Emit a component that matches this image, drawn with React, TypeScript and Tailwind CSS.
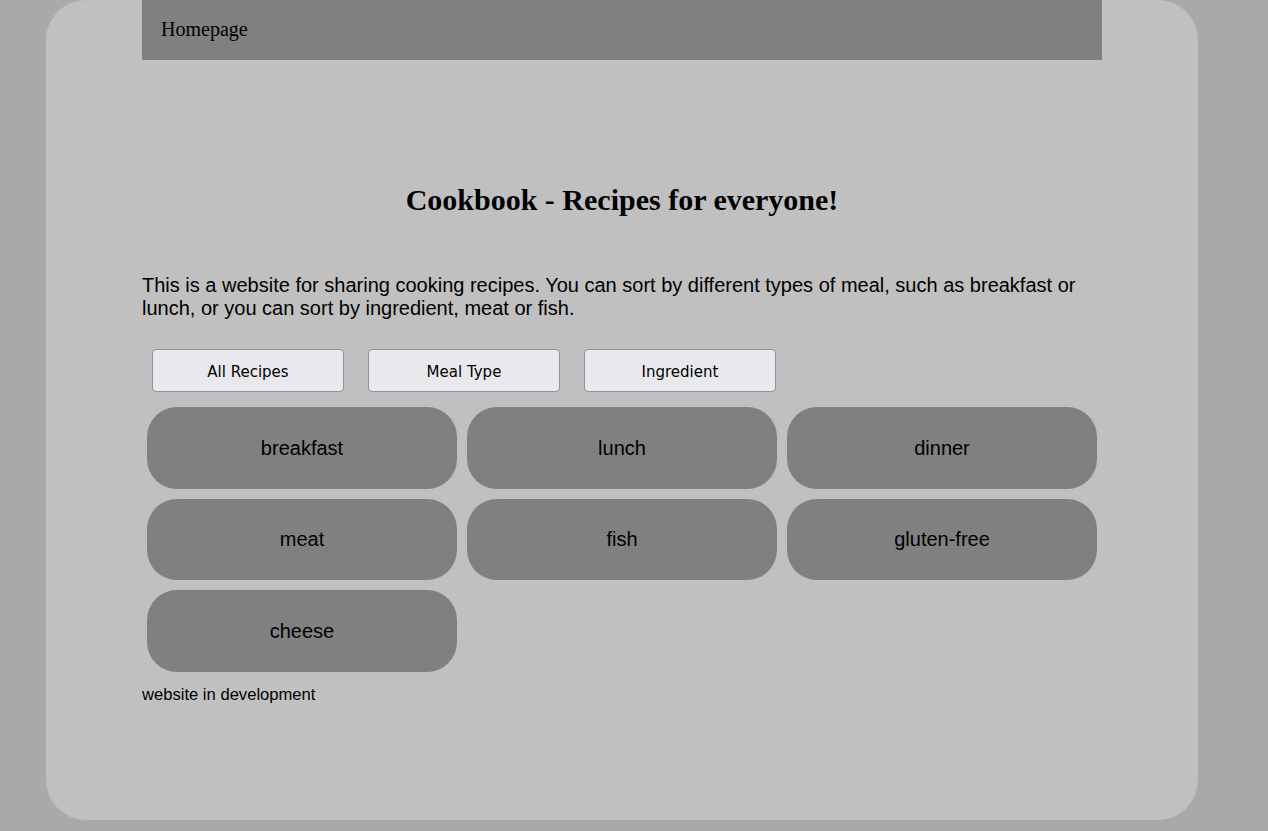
import React from "react";

const categories = ["breakfast", "lunch", "dinner", "meat", "fish", "gluten-free", "cheese"];
const buttons = ["All Recipes", "Meal Type", "Ingredient"];

export default function App() {
  return (
    <div className="min-h-[831px] bg-[#a9a9a9]">
      <div className="ml-[46px] w-[1152px] h-[820px] rounded-[40px] bg-[#c0c0c0] px-[96px]">
        <nav className="h-[60px] bg-[#808080] flex items-center pl-[19px] pb-[2px]">
          <span className="text-[20px] text-black" style={{ fontFamily: '"Liberation Serif", serif' }}>
            Homepage
          </span>
        </nav>
        <h1
          className="mt-[123px] text-center text-[30px] leading-[34px] font-bold text-black"
          style={{ fontFamily: '"Liberation Serif", serif' }}
        >
          Cookbook - Recipes for everyone!
        </h1>
        <p
          className="mt-[57px] text-[20px] leading-[23px] text-black pr-[10px]"
          style={{ fontFamily: '"Liberation Sans", Arial, sans-serif' }}
        >
          This is a website for sharing cooking recipes. You can sort by different types of meal, such as breakfast or
          lunch, or you can sort by ingredient, meat or fish.
        </p>
        <div className="mt-[29px] flex gap-[24px] pl-[10px]">
          {buttons.map((b) => (
            <button
              key={b}
              className="w-[192px] h-[43px] rounded-[4px] border border-[#8f8f9d] bg-[#e9e9ed] text-black pt-[2px]"
              style={{ fontFamily: '"DejaVu Sans", Tahoma, sans-serif' }}
            >
              <span className="text-[15px]">{b}</span>
            </button>
          ))}
        </div>
        <div className="mt-[10px] grid grid-cols-3">
          {categories.map((c) => (
            <div
              key={c}
              className="m-[5px] h-[81.5px] rounded-[30px] bg-[#808080] flex items-center justify-center text-[20px] text-black"
              style={{ fontFamily: '"Liberation Sans", Arial, sans-serif' }}
            >
              {c}
            </div>
          ))}
        </div>
        <p
          className="mt-[9px] text-[16.6px] leading-[18px] text-black"
          style={{ fontFamily: '"Liberation Sans", Arial, sans-serif' }}
        >
          website in development
        </p>
      </div>
    </div>
  );
}
